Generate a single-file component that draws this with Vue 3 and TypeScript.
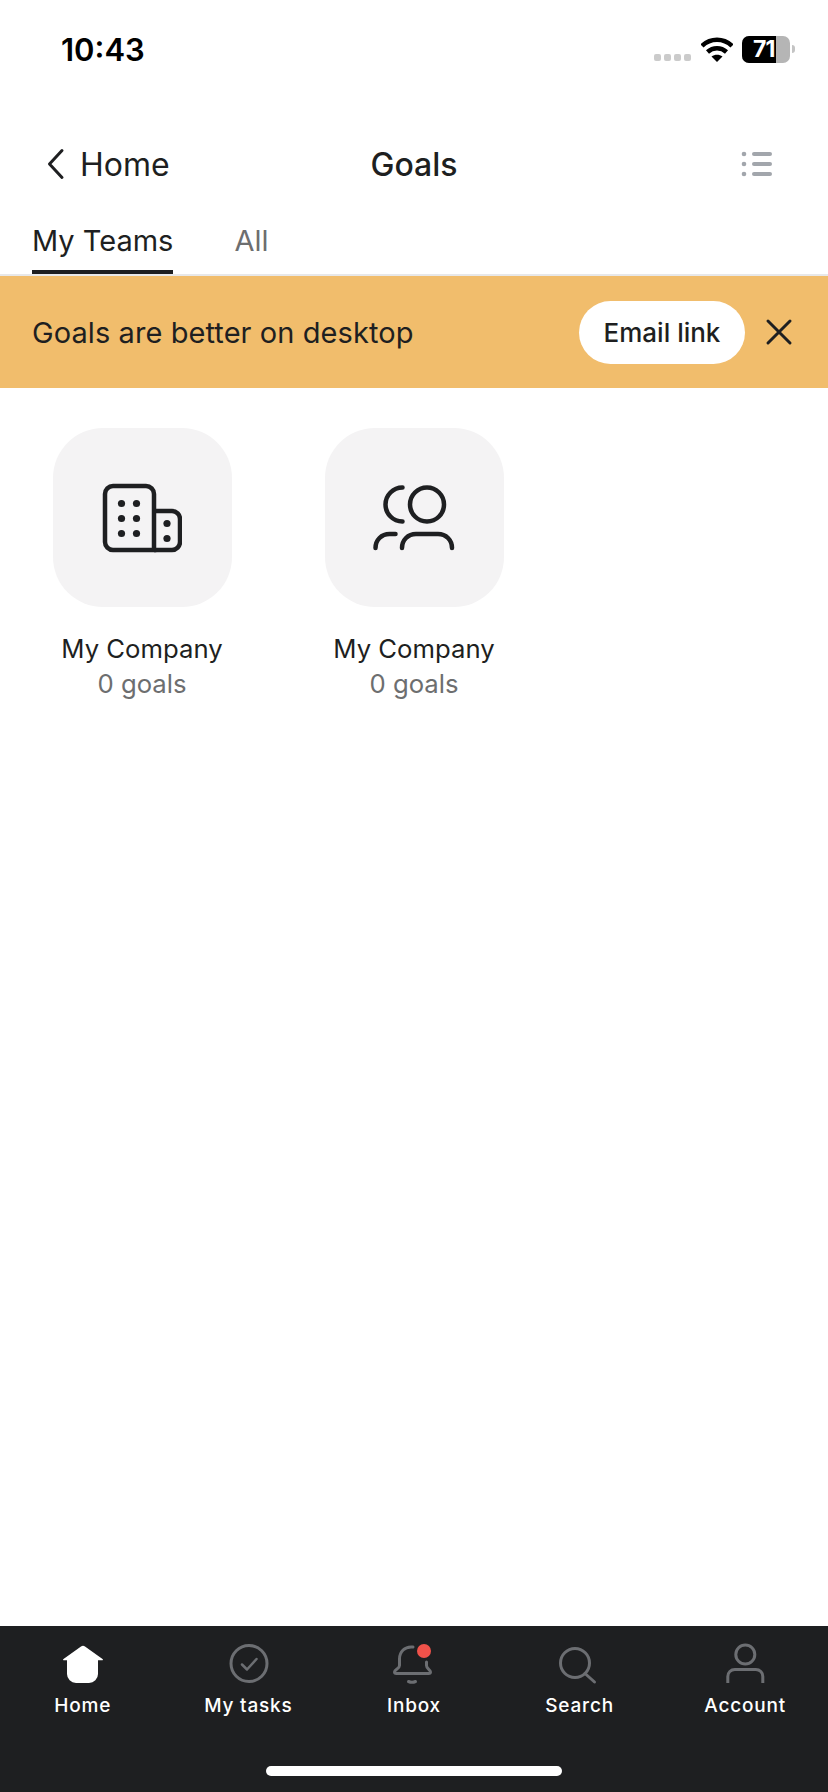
<template>
  <div class="screen">
    <div class="status-bar">
      <span class="time">10:43</span>
      <div class="status-icons">
        <div class="signal">
          <i v-for="n in 4" :key="n"></i>
        </div>
        <svg class="wifi" width="32" height="25" viewBox="0 0 32 25">
          <path d="M1 9C9.500 .8 22.500 .8 31 9" fill="none" stroke="#000" stroke-width="4.500" />
          <path d="M6.500 15C12 10 20 10 25.500 15" fill="none" stroke="#000" stroke-width="4.500" />
          <path d="M16 25 10.500 19.500c3.300-2.400 7.700-2.400 11 0z" fill="#000" />
        </svg>
        <div class="battery">
          <div class="battery-fill">71</div>
        </div>
        <span class="battery-tip"></span>
      </div>
    </div>

    <div class="nav">
      <div class="nav-back">
        <svg width="20" height="32" viewBox="0 0 20 32">
          <path d="M16 2.500 3.500 16 16 29.500" fill="none" stroke="#1e1f21" stroke-width="3" stroke-linecap="round" stroke-linejoin="round" />
        </svg>
        <span>Home</span>
      </div>
      <span class="nav-title">Goals</span>
      <svg class="nav-list" width="32" height="26" viewBox="0 0 32 26">
        <g fill="#a2a6ac">
          <circle cx="3" cy="3" r="2.300" />
          <circle cx="3" cy="13" r="2.300" />
          <circle cx="3" cy="23" r="2.300" />
          <rect x="11" y="1" width="20" height="4" rx="2" />
          <rect x="11" y="11" width="20" height="4" rx="2" />
          <rect x="11" y="21" width="20" height="4" rx="2" />
        </g>
      </svg>
    </div>

    <div class="tabs">
      <div class="tab active">My Teams</div>
      <div class="tab">All</div>
    </div>

    <div class="banner">
      <span class="banner-text">Goals are better on desktop</span>
      <button class="email-btn">Email link</button>
      <svg class="banner-close" width="28" height="28" viewBox="0 0 28 28">
        <path d="M3 3 25 25M25 3 3 25" stroke="#1e1f21" stroke-width="3" stroke-linecap="round" />
      </svg>
    </div>

    <div class="goals">
      <div class="goal" v-for="(team, i) in teams" :key="i">
        <div class="goal-tile">
          <svg v-if="team.icon === 'company'" width="80" height="70" viewBox="0 0 80 70">
            <g fill="none" stroke="#1e1f21" stroke-width="4.500">
              <path d="M3 59V11a8 8 0 0 1 8-8h33a8 8 0 0 1 8 8v56H11a8 8 0 0 1-8-8z" />
              <path d="M52 28h18a8 8 0 0 1 8 8v23a8 8 0 0 1-8 8H52" />
            </g>
            <g fill="#1e1f21">
              <circle cx="19.500" cy="20.500" r="3.600" />
              <circle cx="34.500" cy="20.500" r="3.600" />
              <circle cx="19.500" cy="35.500" r="3.600" />
              <circle cx="34.500" cy="35.500" r="3.600" />
              <circle cx="19.500" cy="50.500" r="3.600" />
              <circle cx="34.500" cy="50.500" r="3.600" />
              <circle cx="65" cy="40.500" r="3.600" />
              <circle cx="65" cy="55.500" r="3.600" />
            </g>
          </svg>
          <svg v-else width="84" height="70" viewBox="-2 0 84 70">
            <g fill="none" stroke="#1e1f21" stroke-width="4.500" stroke-linecap="round">
              <circle cx="53" cy="21.500" r="17" />
              <path d="M28.500 4.500a17 17 0 0 0 0 34" />
              <path d="M28 65c0-8 6-14 14-14h22c8 0 14 6 14 14" />
              <path d="M1.500 65c0-8 6-14 14-14h6" />
            </g>
          </svg>
        </div>
        <div class="goal-name">{{ team.name }}</div>
        <div class="goal-count">{{ team.count }} goals</div>
      </div>
    </div>

    <div class="tabbar">
      <div class="tabbar-items">
        <div class="tabbar-item" v-for="item in tabItems" :key="item.label">
          <div class="tabbar-icon">
            <svg v-if="item.icon === 'home'" width="44" height="44" viewBox="0 0 44 44">
              <path d="M20 4.600a3 3 0 0 1 4 0L41.500 17a.7.7 0 0 1-.5 1.300H37V32a9 9 0 0 1-9 9H15a9 9 0 0 1-9-9V18.300H3a.7.7 0 0 1-.5-1.300Z" fill="#fff" />
            </svg>
            <svg v-else-if="item.icon === 'tasks'" class="line" width="44" height="44" viewBox="0 0 44 44">
              <circle cx="23" cy="21.500" r="18" />
              <path d="M16 22.500 21 27.500 30.500 17" stroke-width="2.500" />
            </svg>
            <svg v-else-if="item.icon === 'inbox'" class="line" width="44" height="44" viewBox="0 0 44 44">
              <path d="M21 5C12.500 4 7.500 10 7.500 17v6.500c0 3.500-5 4-5 6.500 0 1 .5 1.500 2 1.500h32c1.500 0 2-.5 2-1.500 0-2.500-4-3-4-6.500V20" />
              <path d="M16.500 39.500q3.500 1.500 7 0" />
            </svg>
            <svg v-else-if="item.icon === 'search'" class="line" width="44" height="44" viewBox="0 0 44 44">
              <circle cx="17" cy="21" r="14.500" />
              <path d="M27 31.500 36.500 40" />
            </svg>
            <svg v-else class="line" width="44" height="44" viewBox="0 0 44 44">
              <circle cx="22.300" cy="12.500" r="9.500" />
              <path d="M4.800 41v-6.500c0-4 3-7 7-7h21c4 0 7 3 7 7V41" stroke-linecap="butt" />
            </svg>
            <span v-if="item.badge" class="badge"></span>
          </div>
          <span class="tabbar-label">{{ item.label }}</span>
        </div>
      </div>
      <div class="home-indicator"></div>
    </div>
  </div>
</template>

<script setup lang="ts">
interface Team {
  name: string
  count: number
  icon: 'company' | 'people'
}

interface TabItem {
  label: string
  icon: 'home' | 'tasks' | 'inbox' | 'search' | 'account'
  badge?: boolean
}

const teams: Team[] = [
  { name: 'My Company', count: 0, icon: 'company' },
  { name: 'My Company', count: 0, icon: 'people' },
]

const tabItems: TabItem[] = [
  { label: 'Home', icon: 'home' },
  { label: 'My tasks', icon: 'tasks' },
  { label: 'Inbox', icon: 'inbox', badge: true },
  { label: 'Search', icon: 'search' },
  { label: 'Account', icon: 'account' },
]
</script>

<style scoped>
.screen {
  width: 828px;
  height: 1792px;
  display: flex;
  flex-direction: column;
  background: #fff;
  color: #1e1f21;
  font-family: Inter, "Liberation Sans", sans-serif;
  overflow: hidden;
}

.status-bar {
  height: 132px;
  flex: none;
  display: flex;
  justify-content: space-between;
  padding: 32px 33px 0 61px;
  box-sizing: border-box;
}

.time {
  font-size: 31px;
  line-height: 36px;
  font-weight: 600;
  color: #000;
}

.status-icons {
  display: flex;
  align-items: flex-start;
}

.signal {
  display: flex;
  gap: 3px;
  margin: 22px 10px 0 0;
}

.signal i {
  width: 7px;
  height: 7px;
  border-radius: 2px;
  background: #cbcbcb;
}

.wifi {
  margin: 5px 9px 0 0;
}

.battery {
  width: 48px;
  height: 27px;
  margin-top: 4px;
  border-radius: 7px;
  overflow: hidden;
  background: #b5b5b5;
}

.battery-fill {
  width: 34px;
  height: 27px;
  box-sizing: border-box;
  padding-left: 11px;
  overflow: hidden;
  background: #000;
  color: #fff;
  font-size: 23px;
  line-height: 27px;
  font-weight: 700;
  letter-spacing: -1px;
  white-space: nowrap;
}

.battery-tip {
  width: 3px;
  height: 8px;
  margin: 13px 0 0 2px;
  border-radius: 0 3px 3px 0;
  background: #c4c4c4;
}

.nav {
  height: 64px;
  flex: none;
  display: flex;
  align-items: center;
  justify-content: space-between;
  padding: 0 55px 0 46px;
  position: relative;
}

.nav-back {
  display: flex;
  align-items: center;
  gap: 14px;
  font-size: 32px;
}

.nav-title {
  position: absolute;
  left: 0;
  right: 0;
  text-align: center;
  font-size: 32px;
  font-weight: 500;
  pointer-events: none;
}

.tabs {
  flex: none;
  display: flex;
  gap: 61px;
  padding: 0 32px;
  border-bottom: 2px solid #e8e8e9;
}

.tab {
  height: 78px;
  padding-top: 21px;
  box-sizing: border-box;
  font-size: 29px;
  line-height: 48px;
  color: #6d6e6f;
}

.tab.active {
  color: #1e1f21;
  border-bottom: 4px solid #1e1f21;
}

.banner {
  height: 112px;
  flex: none;
  display: flex;
  align-items: center;
  padding: 0 35px 0 32px;
  background: #f1bd6c;
}

.banner-text {
  flex: 1;
  font-size: 29px;
  letter-spacing: 0.08px;
}

.email-btn {
  width: 166px;
  height: 63px;
  border: 0;
  border-radius: 32px;
  background: #fff;
  color: #1e1f21;
  font: inherit;
  font-size: 26px;
  font-weight: 500;
  padding: 0;
}

.banner-close {
  margin-left: 20px;
}

.goals {
  flex: 1;
  display: grid;
  grid-template-columns: repeat(3, 272px);
  align-content: start;
  padding: 40px 6px 0;
}

.goal {
  display: flex;
  flex-direction: column;
  align-items: center;
}

.goal-tile {
  width: 179px;
  height: 179px;
  border-radius: 50px;
  background: #f4f3f4;
  display: flex;
  align-items: center;
  justify-content: center;
}

.goal-name {
  margin-top: 24px;
  font-size: 25.7px;
  line-height: 35px;
}

.goal-count {
  font-size: 25.7px;
  line-height: 36px;
  color: #6d6e6f;
}

.tabbar {
  height: 166px;
  flex: none;
  position: relative;
  background: #1e1f21;
}

.tabbar-items {
  display: grid;
  grid-template-columns: repeat(5, 1fr);
  padding-top: 16px;
}

.tabbar-item {
  display: flex;
  flex-direction: column;
  align-items: center;
}

.tabbar-icon {
  width: 44px;
  height: 44px;
  position: relative;
}

.line {
  fill: none;
  stroke: #6c6e72;
  stroke-width: 3;
  stroke-linecap: round;
  stroke-linejoin: round;
}

.badge {
  position: absolute;
  top: 2px;
  left: 25px;
  width: 14px;
  height: 14px;
  border-radius: 50%;
  background: #f0524a;
}

.tabbar-label {
  margin-top: 8px;
  font-size: 19px;
  line-height: 24px;
  font-weight: 450;
  letter-spacing: 0.8px;
  color: #fff;
}

.home-indicator {
  position: absolute;
  left: 266px;
  bottom: 16px;
  width: 296px;
  height: 10px;
  border-radius: 5px;
  background: #fff;
}
</style>

<style>
body {
  background: #fff;
}
</style>
